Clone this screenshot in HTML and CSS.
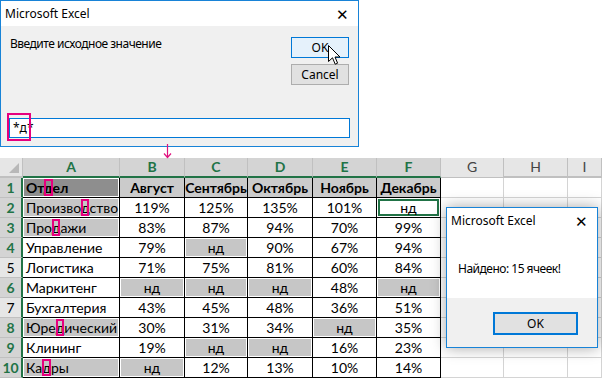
FILE: index.html
```html
<!DOCTYPE html>
<html lang="ru">
<head>
    <meta charset="UTF-8">
    <title>Microsoft Excel - поиск</title>
    <link rel="stylesheet" href="styles.css">
</head>
<body>
    <!-- Окно ввода -->
    <div class="prompt">
        <div class="titlebar">
            <span>Microsoft Excel</span>
            <span class="close">&#x2715;</span>
        </div>
        <div class="prompt-body">
            <div class="prompt-top">
                <p class="message">Введите исходное значение</p>
                <div class="buttons">
                    <button class="btn ok">OK</button>
                    <button class="btn">Cancel</button>
                    <svg class="cursor" width="13" height="21" viewBox="0 0 13 21">
                        <path d="M0.5 0.5 L0.5 16.5 L4.5 12.8 L7.2 19.2 L9.6 18.2 L7 12 L12 12 Z" fill="#fff" stroke="#000" stroke-width="1"/>
                    </svg>
                </div>
            </div>
            <div class="input">
                <span class="query">*д*</span>
            </div>
        </div>
    </div>

    <svg class="arrow" width="9" height="15" viewBox="0 0 9 15">
        <path d="M4.5 0 L4.5 13 M1 9.5 L4.5 13.5 L8 9.5" stroke="#e0137f" stroke-width="1.2" fill="none"/>
    </svg>

    <!-- Лист -->
    <div class="sheet">
        <div class="row head">
            <div class="corner"></div>
            <div class="ch sel">A</div>
            <div class="ch sel">B</div>
            <div class="ch sel">C</div>
            <div class="ch sel">D</div>
            <div class="ch sel">E</div>
            <div class="ch sel">F</div>
            <div class="ch">G</div>
            <div class="ch">H</div>
            <div class="ch">I</div>
        </div>
        <div class="row">
            <div class="rh sel">1</div>
            <div class="c hd first s dark">От<span class="mark">д</span>ел</div>
            <div class="c hd">Август</div>
            <div class="c hd">Сентябрь</div>
            <div class="c hd">Октябрь</div>
            <div class="c hd">Ноябрь</div>
            <div class="c hd">Декабрь</div>
            <div class="g"></div><div class="g"></div><div class="g"></div>
        </div>
        <div class="row">
            <div class="rh sel">2</div>
            <div class="c first s">Произво<span class="mark">д</span>ство</div>
            <div class="c">119%</div>
            <div class="c">125%</div>
            <div class="c">135%</div>
            <div class="c">101%</div>
            <div class="c active">нд</div>
            <div class="g"></div><div class="g"></div><div class="g"></div>
        </div>
        <div class="row">
            <div class="rh sel">3</div>
            <div class="c first s">Про<span class="mark">д</span>ажи</div>
            <div class="c">83%</div>
            <div class="c">87%</div>
            <div class="c">94%</div>
            <div class="c">70%</div>
            <div class="c">99%</div>
            <div class="g"></div><div class="g"></div><div class="g"></div>
        </div>
        <div class="row">
            <div class="rh sel">4</div>
            <div class="c first">Управление</div>
            <div class="c">79%</div>
            <div class="c s">нд</div>
            <div class="c">90%</div>
            <div class="c">67%</div>
            <div class="c">94%</div>
            <div class="g"></div><div class="g"></div><div class="g"></div>
        </div>
        <div class="row">
            <div class="rh">5</div>
            <div class="c first">Логистика</div>
            <div class="c">71%</div>
            <div class="c">75%</div>
            <div class="c">81%</div>
            <div class="c">60%</div>
            <div class="c">84%</div>
            <div class="g"></div><div class="g"></div><div class="g"></div>
        </div>
        <div class="row">
            <div class="rh sel">6</div>
            <div class="c first">Маркитенг</div>
            <div class="c s">нд</div>
            <div class="c s">нд</div>
            <div class="c s">нд</div>
            <div class="c">48%</div>
            <div class="c s">нд</div>
            <div class="g"></div><div class="g"></div><div class="g"></div>
        </div>
        <div class="row">
            <div class="rh">7</div>
            <div class="c first">Бухгалтерия</div>
            <div class="c">43%</div>
            <div class="c">45%</div>
            <div class="c">48%</div>
            <div class="c">36%</div>
            <div class="c">51%</div>
            <div class="g"></div><div class="g"></div><div class="g"></div>
        </div>
        <div class="row">
            <div class="rh sel">8</div>
            <div class="c first s">Юре<span class="mark">д</span>ический</div>
            <div class="c">30%</div>
            <div class="c">31%</div>
            <div class="c">34%</div>
            <div class="c s">нд</div>
            <div class="c">35%</div>
            <div class="g"></div><div class="g"></div><div class="g"></div>
        </div>
        <div class="row">
            <div class="rh sel">9</div>
            <div class="c first">Клининг</div>
            <div class="c">19%</div>
            <div class="c s">нд</div>
            <div class="c s">нд</div>
            <div class="c">16%</div>
            <div class="c">23%</div>
            <div class="g"></div><div class="g"></div><div class="g"></div>
        </div>
        <div class="row">
            <div class="rh sel">10</div>
            <div class="c first s">Ка<span class="mark">д</span>ры</div>
            <div class="c s">нд</div>
            <div class="c">12%</div>
            <div class="c">13%</div>
            <div class="c">10%</div>
            <div class="c">14%</div>
            <div class="g"></div><div class="g"></div><div class="g"></div>
        </div>
    </div>

    <!-- Результат -->
    <div class="result">
        <div class="titlebar">
            <span>Microsoft Excel</span>
            <span class="close">&#x2715;</span>
        </div>
        <div class="result-body">Найдено: 15 ячеек!</div>
        <div class="result-foot">
            <button class="btn big">OK</button>
        </div>
    </div>
</body>
</html>
```

FILE: styles.css
```css
/* Общие стили */
body {
    margin: 0;
    width: 602px;
    height: 380px;
    overflow: hidden;
    position: relative;
    background-color: #fff;
    font-family: "Noto Sans", sans-serif;
    font-size: 12px;
    color: #000;
}

/* Диалоги */
.prompt {
    width: 359px;
    height: 147px;
    box-sizing: border-box;
    border: 1px solid #1883d7;
    background-color: #f0f0f0;
    display: flex;
    flex-direction: column;
}

.titlebar {
    height: 25px;
    flex: none;
    background-color: #fff;
    display: flex;
    justify-content: space-between;
    align-items: center;
    padding: 0 9px 0 4px;
}

.close {
    font-size: 15px;
    font-weight: 300;
}

.prompt-body {
    flex: 1;
    display: flex;
    flex-direction: column;
    padding: 11px 8px 8px 8px;
}

.prompt-top {
    display: flex;
    justify-content: space-between;
}

.message {
    margin: 0 0 0 1px;
    line-height: 14px;
    letter-spacing: -0.5px;
}

.buttons {
    position: relative;
    display: flex;
    flex-direction: column;
    gap: 6px;
    margin-right: 1px;
}

.btn {
    font-family: "Noto Sans", sans-serif;
    font-size: 12px;
    width: 58px;
    height: 21px;
    padding: 0;
    border: 1px solid #adadad;
    background-color: #e1e1e1;
    color: #000;
}

.btn.ok {
    border-color: #0078d7;
    background-color: #e5f1fb;
}

.cursor {
    position: absolute;
    left: 37px;
    top: 8px;
}

.input {
    margin-top: auto;
    height: 20px;
    box-sizing: border-box;
    border: 1px solid #0078d7;
    background-color: #fff;
    display: flex;
    align-items: center;
    padding-left: 3px;
}

.query {
    position: relative;
    line-height: 14px;
}

.query::after {
    content: "";
    position: absolute;
    left: -6px;
    top: -8px;
    width: 20px;
    height: 24px;
    border: 2px solid #e6007e;
}

.arrow {
    position: absolute;
    left: 163px;
    top: 144px;
}

/* Лист */
.sheet {
    margin-top: 11px;
    font-family: Lato, sans-serif;
    font-size: 14px;
}

.row {
    display: grid;
    grid-template-columns: 23px 97px 65px 63px 65px 64px 64px 63px 64px 1fr;
    height: 20px;
}

.row > div {
    box-sizing: border-box;
    border-right: 1px solid #d4d4d4;
    border-bottom: 1px solid #d4d4d4;
    line-height: 19px;
    text-align: center;
    white-space: nowrap;
    overflow: hidden;
}

.row.head > div {
    background-color: #e6e6e6;
    border-right-color: #c0c0c0;
    border-bottom: 2px solid #c0c0c0;
    color: #444;
    line-height: 18px;
}

.row.head > .sel {
    background-color: #d4d4d4;
    color: #217346;
    font-weight: bold;
    border-bottom-color: #217346;
}

.row.head > .ch:nth-child(8) {
    border-bottom: 1px solid #c0c0c0;
}

.row.head > .corner {
    position: relative;
}

.corner::after {
    content: "";
    position: absolute;
    right: 3px;
    bottom: 3px;
    border-left: 10px solid transparent;
    border-bottom: 10px solid #b8b8b8;
}

.row > .rh {
    background-color: #e6e6e6;
    border-bottom-color: #c0c0c0;
    border-right: 2px solid #217346;
    font-size: 14px;
}

.row > .rh.sel {
    background-color: #d4d4d4;
    color: #217346;
    font-weight: bold;
}

.row > .c {
    border-right-color: #000;
    border-bottom-color: #000;
}

.row > .first {
    text-align: left;
    padding-left: 3px;
}

.row > .hd {
    background-color: #cbcbcb;
    font-weight: bold;
}

.row > .s {
    background-color: #c6c6c6;
    box-shadow: inset 0 0 0 1px #fff;
}

.row > .s.dark {
    background-color: #8e8e8e;
}

.row > .active {
    box-shadow: inset 0 0 0 1px #fff, inset 0 0 0 3px #217346;
}

.mark {
    outline: 2px solid #e6007e;
    outline-offset: -2px;
}

/* Окно результата */
.result {
    position: absolute;
    left: 446px;
    top: 207px;
    width: 152px;
    height: 141px;
    box-sizing: border-box;
    border: 1px solid #1883d7;
    background-color: #fff;
    box-shadow: 0 0 14px rgba(0, 0, 0, 0.35);
    display: flex;
    flex-direction: column;
}

.result-body {
    flex: 1;
    padding: 27px 0 0 11px;
    letter-spacing: -0.5px;
}

.result-foot {
    height: 49px;
    background-color: #f0f0f0;
    display: flex;
    justify-content: flex-end;
    padding: 14px 19px 0 0;
    box-sizing: border-box;
}

.btn.big {
    width: 85px;
    height: 23px;
    border: 2px solid #0078d7;
}
```
